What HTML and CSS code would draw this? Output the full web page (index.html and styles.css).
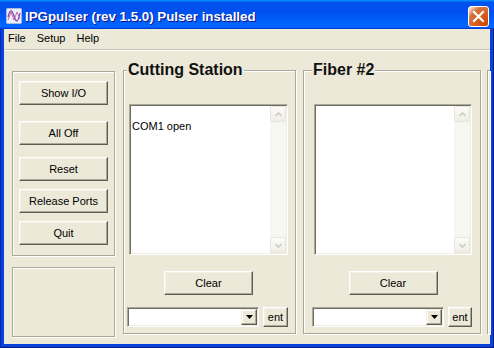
FILE: index.html
```html
<!DOCTYPE html>
<html lang="en">

<head>
    <meta charset="UTF-8">
    <title>IPGpulser</title>
    <link rel="stylesheet" href="styles.css">
</head>

<body>
    <div class="window">
        <div class="titlebar">
            <svg class="app-icon" width="16" height="16" viewBox="0 0 16 16">
                <rect x="0.5" y="0.5" width="15" height="15" rx="1" fill="#e9eefb" stroke="#a9bbe4" />
                <path d="M2 9 C4 1, 6 1, 8 8 S12 15, 14 5" fill="none" stroke="#7b45b5" stroke-width="1.2" />
                <path d="M2 12 L5 4 L8 12 L11 4 L14 11" fill="none" stroke="#c44d86" stroke-width="0.8" />
            </svg>
            <span class="title">IPGpulser (rev 1.5.0) Pulser installed</span>
            <div class="close-btn">
                <svg width="13" height="13" viewBox="0 0 13 13">
                    <path d="M2 2 L11 11 M11 2 L2 11" stroke="#fff" stroke-width="2.2" stroke-linecap="square" />
                </svg>
            </div>
        </div>

        <div class="frame">
            <div class="menubar">
                <span>File</span>
                <span>Setup</span>
                <span>Help</span>
            </div>

            <div class="client">
                <div class="side">
                    <div class="box cmds">
                        <button class="btn cmd show-io">Show I/O</button>
                        <button class="btn cmd all-off">All Off</button>
                        <button class="btn cmd">Reset</button>
                        <button class="btn cmd">Release Ports</button>
                        <button class="btn cmd">Quit</button>
                    </div>
                    <div class="box status"></div>
                </div>

                <div class="station cutting">
                    <div class="station-title">Cutting Station</div>
                    <div class="log">
                        <div class="log-text">
                            <div>&nbsp;</div>
                            <div>COM1 open</div>
                        </div>
                        <div class="vscroll">
                            <div class="sb-btn"><svg width="7" height="5" viewBox="0 0 7 5"><path d="M0.5 4 L3.5 1 L6.5 4" fill="none" stroke="#c9c7ba" stroke-width="1.4" /></svg></div>
                            <div class="sb-track"></div>
                            <div class="sb-btn"><svg width="7" height="5" viewBox="0 0 7 5"><path d="M0.5 1 L3.5 4 L6.5 1" fill="none" stroke="#c9c7ba" stroke-width="1.4" /></svg></div>
                        </div>
                    </div>
                    <button class="btn clear">Clear</button>
                    <div class="send-row">
                        <div class="combo">
                            <div class="combo-drop"><svg width="7" height="4" viewBox="0 0 7 4"><path d="M0 0 H7 L3.5 4 Z" fill="#000" /></svg></div>
                        </div>
                        <button class="btn ent">ent</button>
                    </div>
                </div>

                <div class="station fiber">
                    <div class="station-title">Fiber #2</div>
                    <div class="log">
                        <div class="log-text"></div>
                        <div class="vscroll">
                            <div class="sb-btn"><svg width="7" height="5" viewBox="0 0 7 5"><path d="M0.5 4 L3.5 1 L6.5 4" fill="none" stroke="#c9c7ba" stroke-width="1.4" /></svg></div>
                            <div class="sb-track"></div>
                            <div class="sb-btn"><svg width="7" height="5" viewBox="0 0 7 5"><path d="M0.5 1 L3.5 4 L6.5 1" fill="none" stroke="#c9c7ba" stroke-width="1.4" /></svg></div>
                        </div>
                    </div>
                    <button class="btn clear">Clear</button>
                    <div class="send-row">
                        <div class="combo">
                            <div class="combo-drop"><svg width="7" height="4" viewBox="0 0 7 4"><path d="M0 0 H7 L3.5 4 Z" fill="#000" /></svg></div>
                        </div>
                        <button class="btn ent">ent</button>
                    </div>
                </div>

                <div class="station-tail"></div>
            </div>
        </div>
    </div>
</body>

</html>
```

FILE: styles.css
```css
/* General */
* {
    box-sizing: border-box;
}

body {
    margin: 0;
    font-family: "Liberation Sans", Arial, sans-serif;
    font-size: 11px;
    color: #000;
}

.window {
    width: 494px;
    height: 348px;
    display: flex;
    flex-direction: column;
    background: #0842d9;
    box-shadow: inset 1px 0 #0024b8, inset -1px 0 #001a8c, inset 0 -1px #001a8c;
}

/* Title bar */
.titlebar {
    height: 29px;
    flex-shrink: 0;
    display: flex;
    align-items: center;
    gap: 3px;
    padding: 3px 5px 0 6px;
    background: linear-gradient(180deg, #0997ff, #0053ee 8%, #0050ee 40%, #0066ff 88%, #0066ff 93%, #005bff 95%, #003dd7 96%, #003dd7);
}

.app-icon {
    flex-shrink: 0;
}

.title {
    flex: 1;
    color: #fff;
    font-weight: bold;
    font-size: 13.3px;
    text-shadow: 1px 1px #0f1089;
    white-space: nowrap;
}

.close-btn {
    width: 21px;
    height: 21px;
    border: 1px solid #fff;
    border-radius: 3px;
    display: flex;
    align-items: center;
    justify-content: center;
    background: radial-gradient(circle at 90% 90%, #cc4600 0, #dc6527 55%, #cd7546 70%, #ffccb2 90%, #fff 100%);
}

/* Window body */
.frame {
    flex: 1;
    margin: 0 4px 4px;
    background: #ece9d8;
    display: flex;
    flex-direction: column;
}

.menubar {
    height: 21px;
    flex-shrink: 0;
    display: flex;
    align-items: center;
    gap: 11px;
    padding: 0 0 2px 4px;
    border-bottom: 1px solid #c9c6b8;
    box-shadow: 0 1px #fff;
}

.client {
    flex: 1;
    display: flex;
    align-items: flex-start;
    padding-left: 8px;
}

/* Etched frames */
.box,
.station,
.station-tail {
    border: 1px solid #aca899;
    box-shadow: inset 1px 1px #fff, 1px 1px #fff;
}

.side {
    width: 103px;
    flex-shrink: 0;
    margin-top: 21px;
    display: flex;
    flex-direction: column;
    gap: 11px;
}

.cmds {
    height: 185px;
    padding: 9px 6px 0;
    display: flex;
    flex-direction: column;
    gap: 8px;
}

.status {
    height: 70px;
}

/* Buttons */
.btn {
    font-family: "Liberation Sans", Arial, sans-serif;
    font-size: 11px;
    color: #000;
    background: #ece9d8;
    height: 24px;
    padding: 0;
    border: 1px solid;
    border-color: #fff #5e5c53 #5e5c53 #fff;
    box-shadow: inset -1px -1px #aca899, inset 1px 1px #f4f2e8;
}

.cmd {
    width: 89px;
}

.show-io {
    margin-bottom: 8px;
}

.all-off {
    margin-bottom: 4px;
}

/* Station panels */
.station {
    flex-shrink: 0;
    margin-top: 20px;
    display: flex;
    flex-direction: column;
}

.cutting {
    width: 173px;
    margin-left: 8px;
    padding: 0 7px 6px 5px;
}

.fiber {
    width: 178px;
    margin-left: 7px;
    padding: 0 8px 6px 10px;
}

.station-tail {
    flex: 1;
    height: 264px;
    margin: 20px 0 0 6px;
    border-right: none;
    border-bottom: none;
}

.station-title {
    align-self: flex-start;
    margin: -10px 0 0 -2px;
    padding: 0 1px;
    background: #ece9d8;
    font-size: 16px;
    font-weight: bold;
    line-height: 18px;
    color: #111;
}

.log {
    height: 151px;
    margin-top: 25px;
    display: flex;
    background: #fff;
    padding: 1px;
    border: 1px solid;
    border-color: #aca899 #fff #fff #aca899;
    box-shadow: inset 1px 1px #716f64, inset -1px -1px #f1efe2;
}

.log-text {
    flex: 1;
    padding: 1px;
    line-height: 13px;
}

.vscroll {
    width: 16px;
    display: flex;
    flex-direction: column;
    background: #f7f7f2;
}

.sb-btn {
    height: 16px;
    display: flex;
    align-items: center;
    justify-content: center;
    border: 1px solid #e8e6dc;
    border-radius: 2px;
    background: linear-gradient(#fbfbf8, #efeee6);
}

.sb-track {
    flex: 1;
}

.clear {
    width: 89px;
    align-self: center;
    margin-top: 16px;
}

.send-row {
    display: flex;
    gap: 4px;
    margin: 12px 0 0 -2px;
}

.combo {
    width: 132px;
    height: 20px;
    flex-shrink: 0;
    display: flex;
    justify-content: flex-end;
    background: #fff;
    padding: 1px;
    border: 1px solid;
    border-color: #aca899 #fff #fff #aca899;
    box-shadow: inset 1px 1px #716f64, inset -1px -1px #f1efe2;
}

.combo-drop {
    width: 16px;
    height: 16px;
    display: flex;
    align-items: center;
    justify-content: center;
    background: #ece9d8;
    border: 1px solid;
    border-color: #f1efe2 #5e5c53 #5e5c53 #f1efe2;
    box-shadow: inset -1px -1px #aca899, inset 1px 1px #fff;
}

.ent {
    flex: 1;
    height: 20px;
}
```
